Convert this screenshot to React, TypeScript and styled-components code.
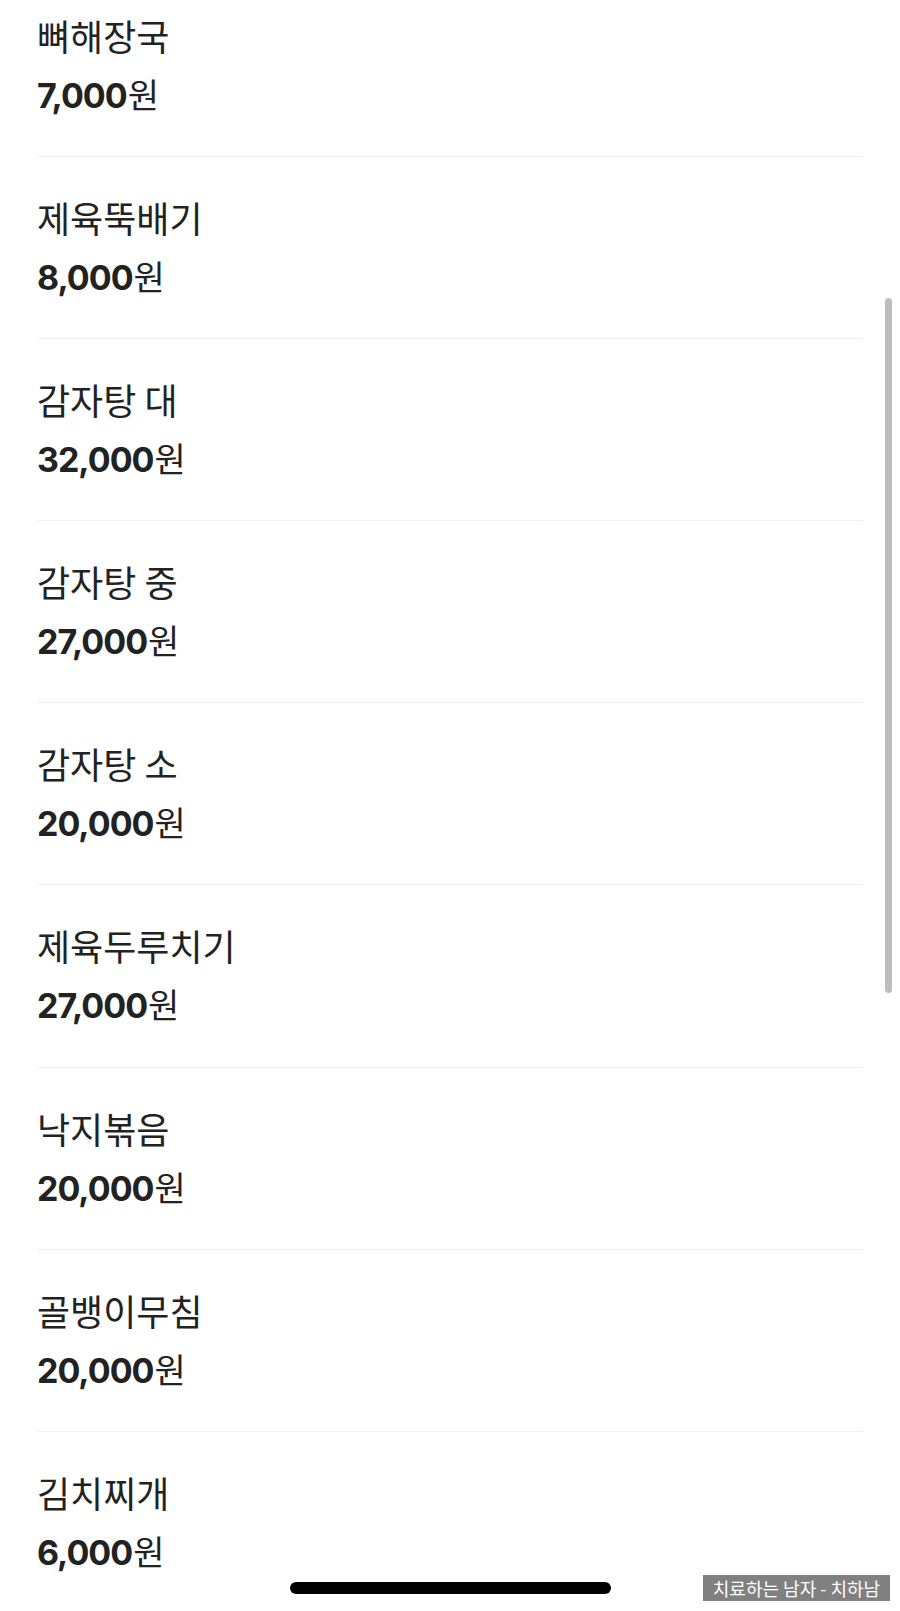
import React from 'react'
import styled, { createGlobalStyle } from 'styled-components'

const GlobalStyle = createGlobalStyle`
  html, body {
    margin: 0;
    padding: 0;
    background: #ffffff;
  }
  body {
    font-family: Inter, "Noto Sans CJK KR", sans-serif;
    color: #222222;
  }
`

const Screen = styled.div`
  position: relative;
  width: 900px;
  height: 1611px;
  overflow: hidden;
  background: #ffffff;
`

const MenuList = styled.ul`
  list-style: none;
  margin: -25.5px 0 0 0;
  padding: 0 37px;
  box-sizing: border-box;
  width: 900px;
`

const MenuRow = styled.li`
  display: flex;
  flex-direction: column;
  gap: 15px;
  padding: 38px 0 40.2px 0;
  border-bottom: 1px solid #f0f0f0;
`

const MenuName = styled.div`
  height: 44px;
  font-family: "Noto Sans CJK KR", sans-serif;
  font-size: 36px;
  line-height: 44px;
  font-weight: 400;
  color: #222222;
  white-space: nowrap;
`

const MenuPrice = styled.div`
  display: flex;
  align-items: baseline;
  height: 44px;
  font-size: 34px;
  line-height: 44px;
  color: #222222;
`

const Amount = styled.span`
  font-family: Inter, "Liberation Sans", sans-serif;
  font-weight: 700;
  letter-spacing: -1px;
`

const Won = styled.span`
  font-family: "Noto Sans CJK KR", sans-serif;
  font-weight: 400;
  margin-left: 1px;
`

const ScrollThumb = styled.div`
  position: absolute;
  right: 8px;
  top: 298px;
  width: 7px;
  height: 695px;
  border-radius: 4px;
  background: #bdbdbd;
`

const BottomBar = styled.div`
  position: absolute;
  left: 0;
  right: 0;
  bottom: 10px;
  height: 26px;
  display: grid;
  grid-template-columns: 1fr 321px 1fr;
  align-items: center;
`

const HomeIndicator = styled.div`
  grid-column: 2;
  height: 12px;
  margin-top: -1px;
  border-radius: 6px;
  background: #000000;
`

const Watermark = styled.div`
  grid-column: 3;
  justify-self: end;
  margin-right: 10px;
  width: 187px;
  height: 26px;
  display: flex;
  align-items: center;
  justify-content: center;
  background: #808080;
  color: #ffffff;
  font-family: "Noto Sans CJK KR", sans-serif;
  font-size: 18px;
  white-space: nowrap;
`

const menu = [
  { name: '뼈해장국', price: 7000 },
  { name: '제육뚝배기', price: 8000 },
  { name: '감자탕 대', price: 32000 },
  { name: '감자탕 중', price: 27000 },
  { name: '감자탕 소', price: 20000 },
  { name: '제육두루치기', price: 27000 },
  { name: '낙지볶음', price: 20000 },
  { name: '골뱅이무침', price: 20000 },
  { name: '김치찌개', price: 6000 },
]

const App = () => (
  <Screen>
    <GlobalStyle />
    <MenuList>
      {menu.map(item => (
        <MenuRow key={item.name}>
          <MenuName>{item.name}</MenuName>
          <MenuPrice>
            <Amount>{item.price.toLocaleString('en-US')}</Amount>
            <Won>원</Won>
          </MenuPrice>
        </MenuRow>
      ))}
    </MenuList>
    <ScrollThumb />
    <BottomBar>
      <HomeIndicator />
      <Watermark>치료하는 남자 - 치하남</Watermark>
    </BottomBar>
  </Screen>
)

export default App
